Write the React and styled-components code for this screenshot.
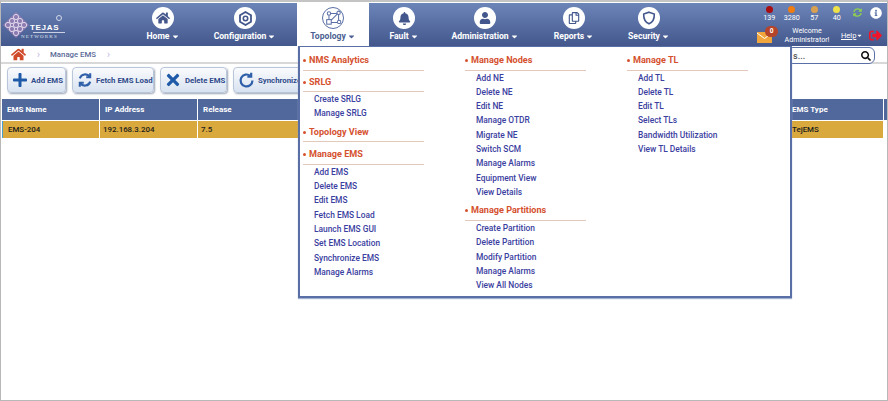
import React from "react";
import styled, { createGlobalStyle } from "styled-components";
import { FaHome, FaBell, FaUser, FaPlus, FaTimes, FaSearch, FaCaretDown, FaSyncAlt, FaInfoCircle, FaSignOutAlt, FaRegCopy } from "react-icons/fa";

const Global = createGlobalStyle`
  html, body { margin: 0; padding: 0; background: #fff; }
  body { font-family: Roboto, "Liberation Sans", sans-serif; }
  * { box-sizing: border-box; }
`;

const Frame = styled.div`
  position: relative;
  width: 888px;
  height: 401px;
  border-top: 2px solid #c4c4c4;
  border-left: 1px solid #b8b8b8;
  border-right: 1px solid #b8b8b8;
  border-bottom: 1px solid #b8b8b8;
  padding-top: 1px;
  overflow: hidden;
`;

const Header = styled.header`
  display: flex;
  height: 43px;
  background: linear-gradient(#6c85b9, #43578c);
  color: #fff;
`;
const Logo = styled.div`
  width: 132px;
  display: flex;
  align-items: flex-start;
  padding: 9px 0 0 2px;
`;
const LogoText = styled.div`
  position: relative;
  width: 44px;
  margin-left: -8px;
  margin-top: 11px;
  display: flex;
  flex-direction: column;
  font-family: "Liberation Sans", sans-serif;
  color: #fff;
`;
const LogoName = styled.span`
  font-size: 8px;
  font-weight: 700;
  letter-spacing: 0.7px;
  line-height: 9px;
  margin-left: 9px;
`;
const LogoRule = styled.span`
  align-self: flex-end;
  width: 32px;
  height: 1px;
  background: #c9d1e4;
`;
const LogoMark = styled.span`
  position: absolute;
  right: 3px;
  top: -8px;
  width: 6px;
  height: 6px;
  border-radius: 50%;
  border: 1px solid #d5daea;
`;
const LogoSub = styled.span`
  font-family: "Liberation Serif", serif;
  font-size: 5px;
  letter-spacing: 1.15px;
  line-height: 7px;
  color: #dde2ee;
  white-space: nowrap;
`;
const NavItem = styled.div`
  width: ${(p) => p.$w}px;
  display: flex;
  flex-direction: column;
  align-items: center;
  padding-top: 4px;
  background: ${(p) => (p.$active ? "#fff" : "transparent")};
  color: ${(p) => (p.$active ? "#4c5f92" : "#fff")};
`;
const NavCircle = styled.div`
  width: 22px;
  height: 22px;
  border-radius: 50%;
  display: flex;
  align-items: center;
  justify-content: center;
  background: #fff;
  border: ${(p) => (p.$active ? "1px solid #5a6fa6" : "none")};
  color: #43578c;
`;
const NavLabel = styled.div`
  margin-top: 2px;
  font-size: 8.6px;
  font-weight: 700;
  line-height: 11px;
  display: flex;
  align-items: center;
  gap: 1px;
  white-space: nowrap;
`;
const StatusArea = styled.div`
  margin-left: auto;
  width: 134px;
  display: flex;
  flex-direction: column;
`;
const StatusTop = styled.div`
  display: flex;
  height: 20px;
  align-items: flex-start;
  padding-left: 5px;
  padding-top: 3px;
`;
const Counter = styled.div`
  width: 22.5px;
  display: flex;
  flex-direction: column;
  align-items: center;
  font-size: 7.2px;
  line-height: 8px;
  color: #fff;
`;
const Dot = styled.span`
  width: 7px;
  height: 7px;
  border-radius: 50%;
  background: ${(p) => p.$c};
  margin-bottom: 1px;
`;
const StatusIcon = styled.div`
  margin: ${(p) => p.$mt || 0}px 0 0 ${(p) => p.$ml || 0}px;
  color: ${(p) => p.$c};
  display: flex;
`;
const StatusBottom = styled.div`
  display: flex;
  align-items: center;
  height: 23px;
  padding: 1px 0 0 4px;
`;
const Mail = styled.div`
  position: relative;
  width: 16px;
  height: 16px;
  display: flex;
  align-items: flex-end;
`;
const MailBadge = styled.span`
  position: absolute;
  left: 8px;
  top: -1px;
  width: 13px;
  height: 11px;
  border-radius: 6px;
  background: #b4442a;
  color: #fff;
  font-size: 6.5px;
  font-weight: 700;
  line-height: 11px;
  text-align: center;
`;
const Welcome = styled.div`
  width: 68px;
  text-align: center;
  font-size: 7.1px;
  line-height: 9px;
  color: #fff;
`;
const Help = styled.span`
  font-size: 7.5px;
  text-decoration: underline;
  color: #fff;
  display: flex;
  align-items: center;
`;
const Logout = styled.div`
  margin-left: 6px;
  color: #f0142a;
  display: flex;
`;

const Crumbs = styled.nav`
  height: 18px;
  border-bottom: 2px solid #d8d8d8;
  display: flex;
  align-items: center;
  padding-left: 10px;
  font-size: 7.8px;
  font-weight: 500;
  color: #5a6a96;
  position: relative;
`;
const CrumbSep = styled.span`
  color: #c9bde4;
  margin: 0 10px 0 11px;
  font-size: 10px;
`;
const SearchBox = styled.div`
  position: absolute;
  right: 12px;
  top: 1px;
  width: 104px;
  height: 17px;
  border: 1.5px solid #5a6fa6;
  border-radius: 6px;
  background: #fff;
  display: flex;
  align-items: center;
  justify-content: space-between;
  padding: 0 3px 0 21px;
  font-size: 9px;
  color: #555;
  z-index: 1;
`;
const Toolbar = styled.div`
  display: flex;
  gap: 6px;
  height: 34px;
  padding: 3px 0 0 6px;
  overflow: hidden;
`;
const ToolButton = styled.button`
  width: ${(p) => p.$w}px;
  height: 26px;
  flex: none;
  display: flex;
  align-items: center;
  gap: 3px;
  padding: 0 0 0 ${(p) => p.$pl || 4}px;
  font-family: inherit;
  font-size: 7.8px;
  font-weight: 700;
  white-space: nowrap;
  color: #2f4a8a;
  background: linear-gradient(#fafbfd, #d8e2f0);
  border: 1px solid #b9c6da;
  border-radius: 4px;
  box-shadow: 1px 1px 2px #9aa5b5;
`;
const Table = styled.div`
  display: grid;
  grid-template-columns: 97px 97px 588px 96px 1fr;
  column-gap: 1px;
  row-gap: 1px;
  padding-left: 1px;
  margin-top: 1px;
`;
const Th = styled.div`
  height: 21px;
  background: #50689b;
  color: #fff;
  font-size: 8px;
  font-weight: 700;
  line-height: 21px;
  padding-left: 5px;
`;
const Td = styled.div`
  height: 17px;
  background: #d9a93e;
  color: #1c1c1c;
  font-size: 7.9px;
  font-weight: 500;
  line-height: 17px;
  padding-left: ${(p) => p.$pl || 3}px;
  border-left: ${(p) => (p.$first ? "1px solid #4aa0d0" : "none")};
`;
const Menu = styled.div`
  position: absolute;
  left: 297px;
  top: 44px;
  width: 494px;
  height: 252px;
  background: #fff;
  border: 2px solid #5a6fa6;
  border-top-width: 1px;
  box-shadow: 0 1px 1px #9fb0d0;
  display: grid;
  grid-template-columns: 162px 162px 1fr;
  padding: 7px 0 0 3px;
  z-index: 3;
`;
const MenuCol = styled.div`
  width: 121px;
`;
const GroupTitle = styled.div`
  font-size: 9.1px;
  font-weight: 700;
  color: #d5512f;
  line-height: 13px;
  height: 16.5px;
  border-bottom: 1px solid #e3c8bc;
  padding-left: 6px;
  margin-top: ${(p) => p.$mt || 0}px;
  position: relative;
  white-space: nowrap;
  &::before {
    content: "";
    position: absolute;
    left: 0;
    top: 5px;
    width: 3px;
    height: 3px;
    border-radius: 50%;
    background: #d5512f;
  }
`;
const MenuLink = styled.div`
  height: 14.33px;
  line-height: 14.33px;
  padding-left: 11px;
  font-size: 8.4px;
  font-weight: 500;
  color: #3a3ea0;
  white-space: nowrap;
`;

const Knot = () => (
  <svg width="26" height="26" viewBox="0 0 26 26" fill="none">
    <path d="M13 0 26 13 13 26 0 13Z" fill="#9a7fb4" opacity="0.8" />
    <g stroke="#e8dff0" strokeWidth="0.9">
      {[[13, 5], [9, 9], [17, 9], [5, 13], [13, 13], [21, 13], [9, 17], [17, 17], [13, 21]].map(([x, y]) => (
        <circle key={x + "-" + y} cx={x} cy={y} r="2.600" />
      ))}
    </g>
  </svg>
);
const TopologyIcon = () => (
  <svg width="17" height="17" viewBox="0 0 15 15" fill="none" stroke="#5a6fa6" strokeWidth="0.9">
    <rect x="1.500" y="8.500" width="4" height="4" />
    <circle cx="3.500" cy="3" r="1.500" />
    <circle cx="12" cy="2.500" r="1.500" />
    <circle cx="12.500" cy="10.500" r="1.500" />
    <path d="M3.500 4.500V8.500M5 3H10.500M5.500 9 11 3.500M5.500 11H11M12 4V9" />
  </svg>
);
const ShieldIcon = () => (
  <svg width="14" height="14" viewBox="0 0 14 14" fill="none" stroke="#43578c" strokeWidth="1.600">
    <path d="M7 1.200 12.300 3c.2 5-1.600 8.200-5.300 9.800C3.300 11.200 1.500 8 1.700 3Z" />
  </svg>
);
const GearIcon = () => (
  <svg width="15" height="15" viewBox="0 0 15 15" fill="none" stroke="#43578c">
    <path d="M7.500 1 13 4.200v6.600L7.500 14 2 10.800V4.200Z" strokeWidth="1.800" />
    <circle cx="7.500" cy="7.500" r="2.200" strokeWidth="1.600" />
  </svg>
);
const MailIcon = () => (
  <svg width="15" height="11" viewBox="0 0 15 11">
    <rect width="15" height="11" fill="#f0a63c" />
    <path d="M0 1 7.500 6.500 15 1" fill="none" stroke="#fff" strokeWidth="1" />
  </svg>
);
const Sync = ({ size, open }) => (
  <svg width={size} height={size} viewBox="0 0 20 20" fill="none" stroke="#2f5fa8" strokeWidth="2.600">
    <path d={open ? "M17 10a7 7 0 1 1-2.400-5.300" : "M3.500 8a7 7 0 0 1 12.500-2M16.500 12a7 7 0 0 1-12.500 2"} />
    <path d={open ? "M15.500 1v4.500H11" : "M16.500 1.500V6.500H11.500M3.500 18.500V13.500H8.500"} />
  </svg>
);

const nav = [
  ["Home", 60, <FaHome size={14} />],
  ["Configuration", 104, <GearIcon />],
  ["Topology", 72, <TopologyIcon />, true],
  ["Fault", 70, <FaBell size={13} />],
  ["Administration", 92, <FaUser size={12} />],
  ["Reports", 86, <FaRegCopy size={12} />],
  ["Security", 64, <ShieldIcon />],
];
const counters = [["139", "#a80d12"], ["3280", "#ef7d12"], ["57", "#d8a050"], ["40", "#eee24a"]];
const columns = [
  [
    { t: "NMS Analytics", items: [] },
    { t: "SRLG", items: ["Create SRLG", "Manage SRLG"], mt: 5 },
    { t: "Topology View", items: [], mt: 5 },
    { t: "Manage EMS", items: ["Add EMS", "Delete EMS", "Edit EMS", "Fetch EMS Load", "Launch EMS GUI", "Set EMS Location", "Synchronize EMS", "Manage Alarms"], mt: 6 },
  ],
  [
    { t: "Manage Nodes", items: ["Add NE", "Delete NE", "Edit NE", "Manage OTDR", "Migrate NE", "Switch SCM", "Manage Alarms", "Equipment View", "View Details"] },
    { t: "Manage Partitions", items: ["Create Partition", "Delete Partition", "Modify Partition", "Manage Alarms", "View All Nodes"], mt: 5 },
  ],
  [{ t: "Manage TL", items: ["Add TL", "Delete TL", "Edit TL", "Select TLs", "Bandwidth Utilization", "View TL Details"] }],
];

export default function App() {
  return (
    <Frame>
      <Global />
      <Header>
        <Logo>
          <Knot />
          <LogoText>
            <LogoMark />
            <LogoName>TEJAS</LogoName>
            <LogoRule />
            <LogoSub>NETWORKS</LogoSub>
          </LogoText>
        </Logo>
        {nav.map(([label, w, icon, active]) => (
          <NavItem key={label} $w={w} $active={active}>
            <NavCircle $active={active}>{icon}</NavCircle>
            <NavLabel>
              {label}
              <FaCaretDown size={9} />
            </NavLabel>
          </NavItem>
        ))}
        <StatusArea>
          <StatusTop>
            {counters.map(([n, c]) => (
              <Counter key={n}>
                <Dot $c={c} />
                {n}
              </Counter>
            ))}
            <StatusIcon $c="#8fcf4e" $ml={5} $mt={2}><FaSyncAlt size={9} /></StatusIcon>
            <StatusIcon $c="#fff" $ml={8} $mt={1}><FaInfoCircle size={12} /></StatusIcon>
          </StatusTop>
          <StatusBottom>
            <Mail>
              <MailIcon />
              <MailBadge>0</MailBadge>
            </Mail>
            <Welcome>Welcome<br />Administrator!</Welcome>
            <Help>Help<FaCaretDown size={7} /></Help>
            <Logout><FaSignOutAlt size={13} /></Logout>
          </StatusBottom>
        </StatusArea>
      </Header>
      <Crumbs>
        <FaHome size={15} color="#cf4a2a" />
        <CrumbSep>›</CrumbSep>
        Manage EMS
        <CrumbSep>›</CrumbSep>
        <SearchBox>s...<FaSearch size={10} color="#111" /></SearchBox>
      </Crumbs>
      <Toolbar>
        <ToolButton $w={59}><FaPlus size={16} color="#1f5aa8" />Add EMS</ToolButton>
        <ToolButton $w={82}><Sync size={16} />Fetch EMS Load</ToolButton>
        <ToolButton $w={67} $pl={3}><FaTimes size={18} color="#1f5aa8" />Delete EMS</ToolButton>
        <ToolButton $w={90}><Sync size={17} open />Synchronize EMS</ToolButton>
      </Toolbar>
      <Table>
        <Th>EMS Name</Th>
        <Th>IP Address</Th>
        <Th>Release</Th>
        <Th>EMS Type</Th>
        <Th />
        <Td $first $pl={5}>EMS-204</Td>
        <Td>192.168.3.204</Td>
        <Td>7.5</Td>
        <Td $pl={5}>TejEMS</Td>
        <div />
      </Table>
      <Menu>
        {columns.map((col, i) => (
          <MenuCol key={i}>
            {col.map((g) => (
              <React.Fragment key={g.t}>
                <GroupTitle $mt={g.mt}>{g.t}</GroupTitle>
                {g.items.map((it) => <MenuLink key={it}>{it}</MenuLink>)}
              </React.Fragment>
            ))}
          </MenuCol>
        ))}
      </Menu>
    </Frame>
  );
}
